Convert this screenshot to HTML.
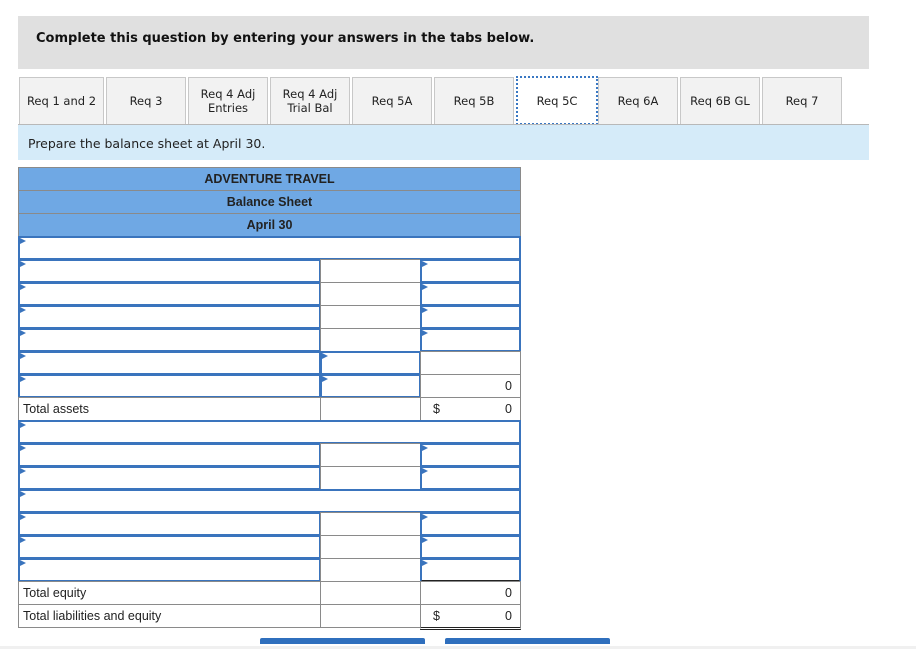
<!DOCTYPE html>
<html><head><meta charset="utf-8"><style>
*{box-sizing:border-box;margin:0;padding:0}
body{width:916px;height:649px;background:#fff;position:relative;overflow:hidden;font-family:Verdana,"DejaVu Sans",sans-serif}
.abs{position:absolute}
.hdr{left:18px;top:16px;width:851px;height:53px;background:#e0e0e0;font-weight:bold;font-size:13px;padding:15px 0 0 18px;color:#111}
.tab{position:absolute;top:77px;height:47px;width:80px;background:#f2f2f2;border:1px solid #c8c8c8;border-bottom:none;font-size:11.5px;color:#222;display:flex;align-items:center;justify-content:center;text-align:center;line-height:14px}
.tab.act{background:#fff;border:2px dotted #3a78c3}
.line{left:18px;top:124px;width:851px;height:1px;background:#b8b8b8}
.band{left:18px;top:125px;width:851px;height:35px;background:#d5ebf9;font-size:12.5px;color:#222;padding:11px 0 0 10px}
.c{position:absolute;border:1px solid #8a8a8a;background:#fff;font-family:"Liberation Sans",Arial,sans-serif;font-size:12.5px;color:#222}
.h{background:#6fa8e4;text-align:center;font-weight:bold;font-size:12.5px;line-height:22px;color:#222}
.in{border:2px solid #3a74bd}
.in::before{content:"";position:absolute;left:0;top:0;border-left:6px solid #3a74bd;border-top:3px solid transparent;border-bottom:3px solid transparent}
.t{padding:4px 0 0 4px}
.n{text-align:right;padding:4px 8px 0 0}
.dl{border-bottom:3px double #222}
.btn{top:638px;height:6px;background:#2f6fbd;border-radius:2px 2px 0 0}
</style></head><body>
<div class="abs hdr">Complete this question by entering your answers in the tabs below.</div>
<div class="tab" style="left:19px;width:85px">Req 1 and 2</div>
<div class="tab" style="left:106px">Req 3</div>
<div class="tab" style="left:188px">Req 4 Adj<br>Entries</div>
<div class="tab" style="left:270px">Req 4 Adj<br>Trial Bal</div>
<div class="tab" style="left:352px">Req 5A</div>
<div class="tab" style="left:434px">Req 5B</div>
<div class="tab act" style="left:516px;height:49px;top:76px;width:82px">Req 5C</div>
<div class="tab" style="left:598px">Req 6A</div>
<div class="tab" style="left:680px">Req 6B GL</div>
<div class="tab" style="left:762px">Req 7</div>
<div class="abs line"></div>
<div class="abs band">Prepare the balance sheet at April 30.</div>

<div class="c h" style="left:18px;top:167px;width:503px;height:24px">ADVENTURE TRAVEL</div>
<div class="c h" style="left:18px;top:190px;width:503px;height:24px">Balance Sheet</div>
<div class="c h" style="left:18px;top:213px;width:503px;height:24px">April 30</div>

<div class="c in" style="left:18px;top:236px;width:503px;height:24px"></div>

<div class="c in" style="left:18px;top:259px;width:303px;height:24px"></div><div class="c" style="left:320px;top:259px;width:101px;height:24px"></div><div class="c in" style="left:420px;top:259px;width:101px;height:24px"></div>
<div class="c in" style="left:18px;top:282px;width:303px;height:24px"></div><div class="c" style="left:320px;top:282px;width:101px;height:24px"></div><div class="c in" style="left:420px;top:282px;width:101px;height:24px"></div>
<div class="c in" style="left:18px;top:305px;width:303px;height:24px"></div><div class="c" style="left:320px;top:305px;width:101px;height:24px"></div><div class="c in" style="left:420px;top:305px;width:101px;height:24px"></div>
<div class="c in" style="left:18px;top:328px;width:303px;height:24px"></div><div class="c" style="left:320px;top:328px;width:101px;height:24px"></div><div class="c in" style="left:420px;top:328px;width:101px;height:24px"></div>
<div class="c in" style="left:18px;top:351px;width:303px;height:24px"></div><div class="c in" style="left:320px;top:351px;width:101px;height:24px"></div><div class="c" style="left:420px;top:351px;width:101px;height:24px"></div>
<div class="c in" style="left:18px;top:374px;width:303px;height:24px"></div><div class="c in" style="left:320px;top:374px;width:101px;height:24px"></div><div class="c n" style="left:420px;top:374px;width:101px;height:24px">0</div>
<div class="c t" style="left:18px;top:397px;width:303px;height:24px">Total assets</div><div class="c" style="left:320px;top:397px;width:101px;height:24px"></div><div class="c n dl" style="left:420px;top:397px;width:101px;height:26px"><span style="position:absolute;left:12px">$</span>0</div>

<div class="c in" style="left:18px;top:420px;width:503px;height:24px"></div>
<div class="c in" style="left:18px;top:443px;width:303px;height:24px"></div><div class="c" style="left:320px;top:443px;width:101px;height:24px"></div><div class="c in" style="left:420px;top:443px;width:101px;height:24px"></div>
<div class="c in" style="left:18px;top:466px;width:303px;height:24px"></div><div class="c" style="left:320px;top:466px;width:101px;height:24px"></div><div class="c in" style="left:420px;top:466px;width:101px;height:24px"></div>
<div class="c in" style="left:18px;top:489px;width:503px;height:24px"></div>
<div class="c in" style="left:18px;top:512px;width:303px;height:24px"></div><div class="c" style="left:320px;top:512px;width:101px;height:24px"></div><div class="c in" style="left:420px;top:512px;width:101px;height:24px"></div>
<div class="c in" style="left:18px;top:535px;width:303px;height:24px"></div><div class="c" style="left:320px;top:535px;width:101px;height:24px"></div><div class="c in" style="left:420px;top:535px;width:101px;height:24px"></div>
<div class="c in" style="left:18px;top:558px;width:303px;height:24px"></div><div class="c" style="left:320px;top:558px;width:101px;height:24px"></div><div class="c in" style="left:420px;top:558px;width:101px;height:24px;border-bottom-color:#222"></div>
<div class="c t" style="left:18px;top:581px;width:303px;height:24px">Total equity</div><div class="c" style="left:320px;top:581px;width:101px;height:24px"></div><div class="c n" style="left:420px;top:581px;width:101px;height:24px">0</div>
<div class="c t" style="left:18px;top:604px;width:303px;height:24px">Total liabilities and equity</div><div class="c" style="left:320px;top:604px;width:101px;height:24px"></div><div class="c n dl" style="left:420px;top:604px;width:101px;height:26px"><span style="position:absolute;left:12px">$</span>0</div>

<div class="abs btn" style="left:260px;width:165px"></div>
<div class="abs btn" style="left:445px;width:165px"></div>
<div class="abs" style="left:0;top:646px;width:916px;height:3px;background:#f0f0f0"></div>
</body></html>
